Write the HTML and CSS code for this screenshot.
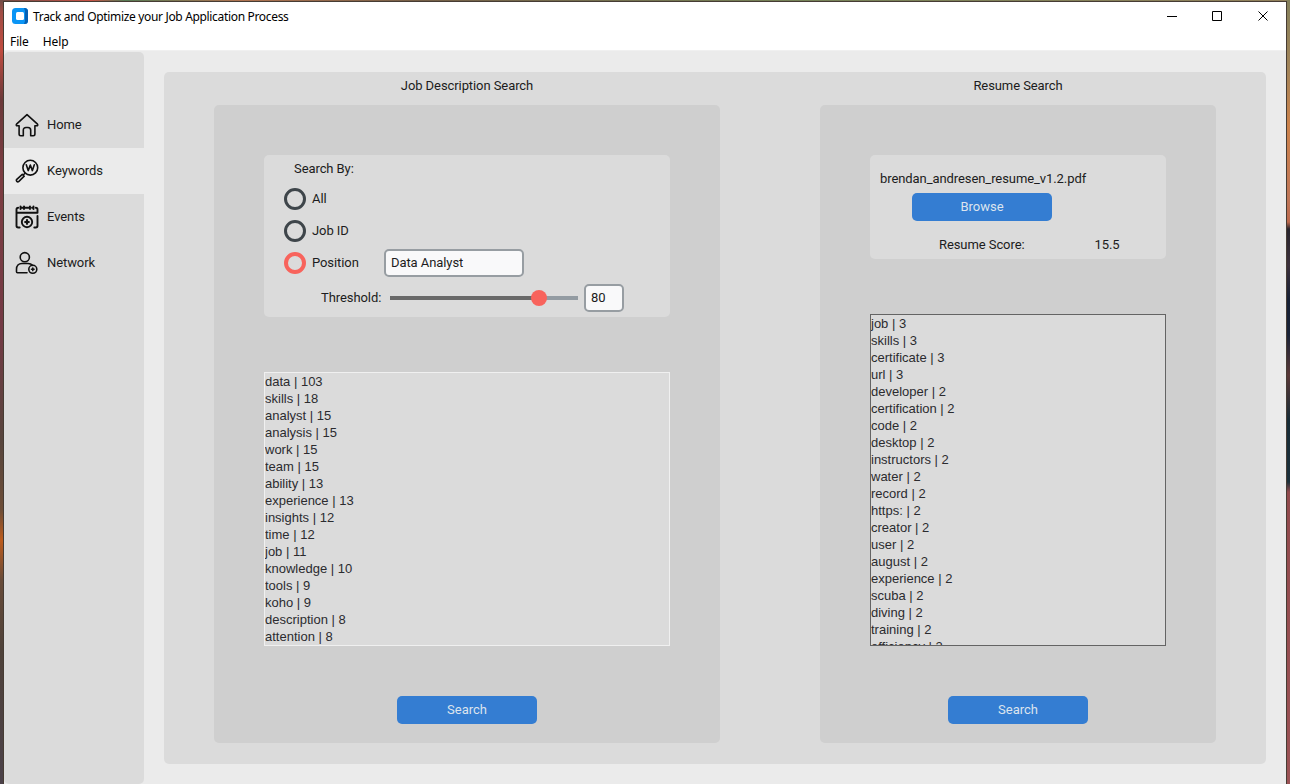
FILE: index.html
```html
<!DOCTYPE html>
<html lang="en">
<head>
<meta charset="utf-8">
<title>Track and Optimize your Job Application Process</title>
<link rel="stylesheet" href="styles.css">
</head>
<body>
<div class="window">
  <header class="titlebar">
    <svg class="app-icon" width="16" height="16" viewBox="0 0 16 16"><rect width="16" height="16" rx="3.5" fill="#0a95f5"/><path d="M12 0h.5A3.5 3.5 0 0 1 16 3.5v9a3.5 3.5 0 0 1-3.500 3.500H12l1-3V3z" fill="#0560b4"/><rect x="4" y="4" width="8" height="8" rx="1.5" fill="#fff"/></svg>
    <h1 class="title">Track and Optimize your Job Application Process</h1>
    <svg class="controls" width="102" height="12" viewBox="0 0 102 12" fill="none" stroke="#000"><path d="M0 6.500h10M45.500 1.500h9v9h-9zM91.500 1.500l9 9M100.500 1.500l-9 9"/></svg>
  </header>
  <nav class="menubar"><span>File</span><span>Help</span></nav>
  <div class="body">
    <aside class="sidebar">
      <a class="nav-item">
        <svg class="nav-icon" viewBox="0 0 24 24"><path d="M12 1.700 1.500 11.200c-.6.700-.1 1.600.8 1.600h1.800v8.200c0 1 .6 1.700 1.700 1.700h2.500v-5.500c0-1.700 1-2.700 2.700-2.700h2c1.700 0 2.700 1 2.700 2.700v5.500h2.500c1.100 0 1.700-.7 1.700-1.700v-8.200h1.800c.9 0 1.400-.9.800-1.600z"/></svg>
        <span>Home</span></a>
      <a class="nav-item active">
        <svg class="nav-icon" viewBox="0 0 24 24"><circle cx="15.300" cy="8.700" r="7.400"/><path d="m11.300 5.800 1.900 5.800 2.100-5.500 2.100 5.500 1.900-5.800M10 14.300l-1.500 1.500M7.300 15.300l1.900 1.900-5.300 5.100c-1.500 1.300-3.300-.5-2.100-2z"/></svg>
        <span>Keywords</span></a>
      <a class="nav-item">
        <svg class="nav-icon bold" viewBox="0 0 24 24"><path d="M6.500 2.800h1M10 2.800h4M17 2.800h1M5.500 1.500v2.500M9 1.500v2.500M15 1.500v2.500M18.500 1.500v2.500M3.200 2.800c-1.200 0-1.700.6-1.700 1.700v16.300c0 1.200.6 1.700 1.700 1.700h1.500M20.800 2.800c1.200 0 1.700.6 1.700 1.700v3.300H1.500M22.500 11v9.800c0 1.200-.6 1.700-1.700 1.700h-1.500"/><circle cx="12" cy="17" r="5.200"/><path class="heavy" d="M12 15.200v3.600M10.200 17h3.600"/></svg>
        <span>Events</span></a>
      <a class="nav-item">
        <svg class="nav-icon" viewBox="0 0 24 24"><circle cx="9.800" cy="6.200" r="4.600"/><path d="M12 21.700H2.500c-.7 0-1-.4-1-1v-2.500c0-3.700 2-5.700 5.500-5.700h6c2 0 3.500.6 4.500 1.800"/><circle cx="17.800" cy="18.300" r="4"/><path d="M17.800 17v2.600M16.500 18.300h2.600"/></svg>
        <span>Network</span></a>
    </aside>
    <main class="content">
      <section class="column jobs">
        <h2>Job Description Search</h2>
        <div class="panel">
          <div class="card search-card">
            <p class="legend">Search By:</p>
            <label class="radio"><i></i>All</label>
            <label class="radio"><i></i>Job ID</label>
            <div class="position-row"><label class="radio selected"><i></i>Position</label><div class="entry">Data Analyst</div></div>
            <div class="threshold"><span>Threshold:</span><div class="slider"><div class="fill"></div><div class="knob"></div></div><div class="entry small">80</div></div>
          </div>
          <ul class="list light">
            <li>data | 103</li><li>skills | 18</li><li>analyst | 15</li><li>analysis | 15</li><li>work | 15</li><li>team | 15</li><li>ability | 13</li><li>experience | 13</li><li>insights | 12</li><li>time | 12</li><li>job | 11</li><li>knowledge | 10</li><li>tools | 9</li><li>koho | 9</li><li>description | 8</li><li>attention | 8</li>
          </ul>
          <button class="button">Search</button>
        </div>
      </section>
      <section class="column resume">
        <h2>Resume Search</h2>
        <div class="panel">
          <div class="card resume-card">
            <p class="file">brendan_andresen_resume_v1.2.pdf</p>
            <button class="button">Browse</button>
            <div class="score"><span>Resume Score:</span><span>15.5</span></div>
          </div>
          <ul class="list dark">
            <li>job | 3</li><li>skills | 3</li><li>certificate | 3</li><li>url | 3</li><li>developer | 2</li><li>certification | 2</li><li>code | 2</li><li>desktop | 2</li><li>instructors | 2</li><li>water | 2</li><li>record | 2</li><li>https: | 2</li><li>creator | 2</li><li>user | 2</li><li>august | 2</li><li>experience | 2</li><li>scuba | 2</li><li>diving | 2</li><li>training | 2</li><li>efficiency | 2</li>
          </ul>
          <button class="button">Search</button>
        </div>
      </section>
    </main>
  </div>
</div>
</body>
</html>
```
FILE: styles.css
```css
* { box-sizing: border-box; margin: 0; padding: 0; }
body {
  height: 784px; overflow: hidden; padding: 1px 3px 0;
  font: 13px/18px Roboto, sans-serif; letter-spacing: -.08px; color: #1c1c20;
  background:
    linear-gradient(#704c46, #a04d45 12px, #c04c40 50px, #6b393a 100px, #7c3d42 180px, #733a45 330px, #57453d 440px, #6d4d37 510px, #bd5b1c 540px, #684b39 580px, #4f423a 650px, #4b4149 784px) left / 4px 100% no-repeat,
    linear-gradient(#85815c, #a38459 70px, #cc824b 125px, #bf7658 200px, #bd694d 222px, #28252d 229px, #3c303b 265px, #172035 300px, #1a2337 335px, #593837 375px, #172b36 420px, #1c303b 482px, #914a4d 492px, #9b5255 784px) right / 4px 100% no-repeat,
    linear-gradient(90deg, #704c46, #c95245 90px, #577b55 125px, #b07350 240px, #755f47 420px, #768358 800px, #92805b 1290px);
}
h1, h2 { font-weight: 400; font-size: 13px; }
ul { list-style: none; }
.window { height: 784px; display: flex; flex-direction: column; background: #ebebeb; border: 1px solid #463c34; border-bottom: 0; }
.titlebar { height: 29px; flex: none; display: flex; align-items: flex-start; background: #fff; padding: 6px 17px 0 8px; }
.app-icon { flex: none; }
.title { font: 12px/18px "Noto Sans", sans-serif; letter-spacing: -.33px; color: #000; margin-left: 5px; white-space: nowrap; }
.controls { margin: 2px 0 0 auto; }
.menubar { height: 20px; flex: none; display: flex; gap: 14px; padding: 2px 6px 0; background: #fff; border-bottom: 1px solid #f0f0f0; color: #000; font: 12px/18px "Noto Sans", sans-serif; letter-spacing: -.1px; }
.body { display: flex; height: 733px; padding-top: 1px; }
.sidebar { width: 140px; height: 732px; flex: none; background: #dbdbdb; border-radius: 5px; padding-top: 50px; }
.nav-item { height: 46px; display: flex; align-items: center; gap: 8px; padding-left: 11px; }
.nav-item.active { background: #ebebeb; }
.nav-icon { width: 24px; height: 24px; fill: none; stroke: #111; stroke-width: 1.6; stroke-linecap: round; stroke-linejoin: round; }
.nav-icon.bold { stroke-width: 1.9; }
.nav-icon .heavy { stroke-width: 2.2; }
.content { width: 1102px; height: 692px; margin: 20px 0 0 20px; padding: 5px 50px 0; background: #dbdbdb; border-radius: 5px; display: flex; gap: 100px; }
.column h2 { text-align: center; line-height: 18px; margin-bottom: 10px; }
.jobs { width: 506px; }
.resume { width: 396px; }
.panel { height: 638px; background: #cfcfcf; border-radius: 5px; padding: 50px 50px 0; display: flex; flex-direction: column; align-items: center; }
.card { width: 100%; flex: none; background: #dbdbdb; border-radius: 5px; }
.search-card { height: 162px; padding: 5px 20px 0; }
.legend { padding-left: 10px; height: 23px; }
.radio { display: flex; align-items: center; gap: 6px; height: 32px; }
.radio i { width: 22px; height: 22px; border: 3px solid #3e454a; border-radius: 50%; }
.radio.selected i { border-width: 4px; border-color: #f8635c; }
.position-row { display: flex; align-items: center; }
.position-row .radio { width: 100px; }
.entry { width: 140px; height: 28px; background: #f9f9fa; border: 2px solid #979da2; border-radius: 5px; padding-left: 5px; line-height: 24px; }
.entry.small { width: 40px; margin-left: 6px; }
.threshold { display: flex; align-items: center; height: 28px; margin-top: 5px; padding-left: 37px; }
.threshold > span { width: 69px; }
.slider { width: 188px; height: 4px; background: #939ba2; position: relative; }
.fill { width: 149px; height: 4px; background: #696969; }
.knob { position: absolute; left: 141px; top: -6px; width: 16px; height: 16px; border-radius: 50%; background: #f8635c; }
.list { width: 100%; flex: none; margin-top: 55px; overflow: hidden; background: #dbdbdb; border: 1px solid #f0f0f0; color: #2b2b2f; font: 13px/17px "Liberation Sans", Arial, sans-serif; letter-spacing: 0; }
.list li { height: 17px; white-space: nowrap; }
.list.light { height: 274px; }
.list.dark { height: 332px; border-color: #646464; }
.button { display: block; width: 140px; height: 28px; border: 0; border-radius: 5px; background: #347dd2; color: #dce4ee; font: 13px/28px Roboto, sans-serif; }
.panel > .button { margin-top: 50px; flex: none; }
.resume-card { height: 104px; padding: 15px 10px 0; }
.resume-card .button { margin: 5px 0 0 32px; }
.score { display: flex; gap: 70px; padding: 15px 0 0 59px; }
```
